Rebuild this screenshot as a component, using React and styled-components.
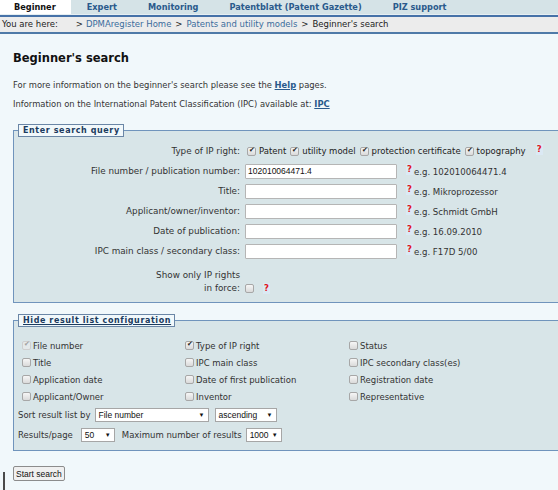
import React from "react";
import styled, { createGlobalStyle } from "styled-components";

const GlobalStyle = createGlobalStyle`
  html, body {
    margin: 0;
    padding: 0;
    background: #f1f8fb;
    overflow: hidden;
  }
  body {
    font-family: "DejaVu Sans", Verdana, sans-serif;
    font-size: 8.5px;
    color: #2a2a2a;
  }
`;

const tabs = ["Beginner", "Expert", "Monitoring", "Patentblatt (Patent Gazette)", "PIZ support"];

const ipTypes = ["Patent", "utility model", "protection certificate", "topography"];

const queryRows = [
  { label: "File number / publication number:", value: "102010064471.4", hint: "e.g. 102010064471.4" },
  { label: "Title:", value: "", hint: "e.g. Mikroprozessor" },
  { label: "Applicant/owner/inventor:", value: "", hint: "e.g. Schmidt GmbH" },
  { label: "Date of publication:", value: "", hint: "e.g. 16.09.2010" },
  { label: "IPC main class / secondary class:", value: "", hint: "e.g. F17D 5/00" },
];

const columns = [
  ["File number", "Title", "Application date", "Applicant/Owner"],
  ["Type of IP right", "IPC main class", "Date of first publication", "Inventor"],
  ["Status", "IPC secondary class(es)", "Registration date", "Representative"],
];

function App() {
  return (
    <Page>
      <GlobalStyle />
      <TabBar>
        {tabs.map((t, i) => (
          <Tab key={t} $active={i === 0}>{t}</Tab>
        ))}
      </TabBar>
      <Breadcrumb>
        You are here:<Sep $first>&gt;</Sep><Crumb>DPMAregister Home</Crumb><Sep>&gt;</Sep>
        <Crumb>Patents and utility models</Crumb><Sep>&gt;</Sep>Beginner's search
      </Breadcrumb>

      <Content>
        <Title>Beginner's search</Title>
        <Info>For more information on the beginner's search please see the <InfoLink>Help</InfoLink> pages.</Info>
        <Info>Information on the International Patent Classification (IPC) available at: <InfoLink>IPC</InfoLink></Info>

        <Fieldset $top={10} $padTop={4} $padBottom={7}>
          <Legend>Enter search query</Legend>
          <Row>
            <Label>Type of IP right:</Label>
            <TypeList>
              {ipTypes.map((t) => (
                <TypeItem key={t}>
                  <Check type="checkbox" defaultChecked />
                  {t}
                </TypeItem>
              ))}
            </TypeList>
            <Help $gap={10}>?</Help>
          </Row>
          {queryRows.map((r) => (
            <Row key={r.label}>
              <Label>{r.label}</Label>
              <TextInput type="text" defaultValue={r.value} />
              <Help $gap={9}>?</Help>
              <Hint>{r.hint}</Hint>
            </Row>
          ))}
          <TallRow>
            <Label>Show only IP rights<br />in force:</Label>
            <Check type="checkbox" $bottom={2} />
            <Help $gap={8} $bottom={1}>?</Help>
          </TallRow>
        </Fieldset>

        <Fieldset $top={11} $padTop={10} $padBottom={5}>
          <Legend $underline>Hide result list configuration</Legend>
          <ColumnGrid>
            {columns[0].map((_, row) =>
              columns.map((col, c) => (
                <Option key={col[row]}>
                  <Check
                    type="checkbox"
                    defaultChecked={row === 0 && c < 2}
                    disabled={row === 0 && c === 0}
                  />
                  {col[row]}
                </Option>
              ))
            )}
          </ColumnGrid>
          <SelectRow>
            Sort result list by
            <FakeSelect $width={114} $gap={4}>File number<Arrow>▼</Arrow></FakeSelect>
            <FakeSelect $width={62} $gap={6}>ascending<Arrow>▼</Arrow></FakeSelect>
          </SelectRow>
          <SelectRow>
            Results/page
            <FakeSelect $width={34} $gap={8}>50<Arrow>▼</Arrow></FakeSelect>
            <Spacer />
            Maximum number of results
            <FakeSelect $width={36} $gap={4}>1000<Arrow>▼</Arrow></FakeSelect>
          </SelectRow>
        </Fieldset>

        <ButtonRow>
          <Caret />
          <SubmitButton type="button">Start search</SubmitButton>
        </ButtonRow>
      </Content>
    </Page>
  );
}

const Page = styled.div`
  width: 558px;
  height: 490px;
  overflow: hidden;
  display: flex;
  flex-direction: column;
`;

const TabBar = styled.div`
  display: flex;
  height: 14px;
  background: #d5e3e7;
  border-bottom: 1px solid #e6eff3;
`;

const Tab = styled.div`
  font-weight: bold;
  font-size: 8.2px;
  line-height: 14px;
  padding: 0 15px;
  background: ${(p) => (p.$active ? "#ffffff" : "transparent")};
  color: ${(p) => (p.$active ? "#111" : "#2a5a8c")};
  &:first-child {
    padding-left: 14px;
  }
  & + & {
    padding-left: 16px;
  }
`;

const Breadcrumb = styled.div`
  height: 15px;
  line-height: 15px;
  background: #ececec;
  border-top: 2px solid #4672a8;
  border-bottom: 2px solid #4f7aa8;
  padding-left: 2px;
  color: #222;
  white-space: nowrap;
`;

const Sep = styled.span`
  margin: 0 ${(p) => (p.$first ? "3px" : "4px")} 0 ${(p) => (p.$first ? "18px" : "4px")};
`;

const Crumb = styled.span`
  color: #3b6d9c;
`;

const Content = styled.div`
  padding: 16px 0 0 13px;
  display: flex;
  flex-direction: column;
  align-items: flex-start;
`;

const Title = styled.h1`
  margin: 0 0 9px;
  font-size: 11.5px;
  font-weight: bold;
  color: #111;
  line-height: 17px;
`;

const Info = styled.p`
  margin: 0;
  font-size: 8.4px;
  line-height: 19px;
  color: #333;
`;

const InfoLink = styled.a`
  font-weight: bold;
  color: #2a5a8c;
  text-decoration: underline;
`;

const Fieldset = styled.fieldset`
  align-self: stretch;
  margin: ${(p) => p.$top}px -20px 0 0;
  padding: ${(p) => p.$padTop}px 0 ${(p) => p.$padBottom}px 0;
  border: 1px solid #7094bc;
  background: #d8e5e8;
  min-width: 0;
`;

const Legend = styled.legend`
  margin-left: 4px;
  padding: 1px 3px 0 4px;
  border: 1px solid #6a86a6;
  background: #f1f8fb;
  font-weight: bold;
  font-size: 8px;
  letter-spacing: 0.6px;
  line-height: 10px;
  color: #1b3b5e;
  text-decoration: ${(p) => (p.$underline ? "underline" : "none")};
`;

const Row = styled.div`
  display: flex;
  align-items: center;
  height: 20px;
`;

const TallRow = styled.div`
  display: flex;
  align-items: flex-end;
  height: 34px;
`;

const Label = styled.div`
  width: 226px;
  flex-shrink: 0;
  text-align: right;
  padding-right: 5px;
  font-size: 8.8px;
  line-height: 13px;
  color: #333;
`;

const TypeList = styled.div`
  display: flex;
  align-items: center;
  gap: 4px;
  margin-left: 2px;
  color: #222;
`;

const TypeItem = styled.label`
  display: flex;
  align-items: center;
  gap: 2px;
`;

const Check = styled.input`
  appearance: none;
  margin: 0 1px ${(p) => p.$bottom ?? 0}px 0;
  width: 9px;
  height: 9px;
  border: 1px solid #a7a7a7;
  border-radius: 2px;
  background: linear-gradient(#f6f6f6, #dadada);
  position: relative;
  flex-shrink: 0;
  &:checked::after {
    content: "✔";
    position: absolute;
    left: 1px;
    top: -2px;
    font-size: 7px;
    color: #222;
  }
  &:disabled {
    border-color: #cfcfcf;
    background: #e4e9ea;
  }
  &:disabled::after {
    color: #a0a0a0;
  }
`;

const TextInput = styled.input`
  box-sizing: border-box;
  width: 152px;
  height: 15px;
  margin: 0;
  padding: 0 2px;
  border: 1px solid #b5b5b5;
  border-radius: 1px;
  background: #fff;
  font-family: "Liberation Sans", Arial, sans-serif;
  font-size: 8.5px;
  color: #111;
`;

const Help = styled.span`
  margin-left: ${(p) => p.$gap}px;
  margin-bottom: ${(p) => p.$bottom ?? 0}px;
  padding: 0 1px;
  background: #dbe9f4;
  color: #e0141a;
  font-weight: bold;
  font-size: 8.5px;
  line-height: 11px;
  align-self: ${(p) => (p.$bottom === undefined ? "flex-start" : "auto")};
  margin-top: ${(p) => (p.$bottom === undefined ? "3px" : "0")};
`;

const Hint = styled.span`
  margin-left: 1px;
  padding-top: 2px;
  font-size: 8.6px;
  color: #333;
`;

const ColumnGrid = styled.div`
  display: grid;
  grid-template-columns: 163px 164px 1fr;
  grid-auto-rows: 17px;
  padding-left: 8px;
`;

const Option = styled.label`
  display: flex;
  align-items: center;
  gap: 1px;
  color: #333;
`;

const SelectRow = styled.div`
  display: flex;
  align-items: center;
  height: 20px;
  padding-left: 4px;
  color: #333;
`;

const FakeSelect = styled.div`
  position: relative;
  box-sizing: border-box;
  width: ${(p) => p.$width}px;
  height: 14px;
  margin-left: ${(p) => p.$gap}px;
  padding-left: 3px;
  line-height: 12px;
  border: 1px solid #a6a6a6;
  background: #fff;
  font-family: "Liberation Sans", Arial, sans-serif;
  font-size: 8.5px;
  color: #111;
`;

const Arrow = styled.span`
  position: absolute;
  right: 3px;
  top: 0;
  font-size: 6px;
  color: #111;
`;

const Spacer = styled.span`
  width: 7px;
`;

const ButtonRow = styled.div`
  display: flex;
  align-items: flex-start;
  margin: 15px 0 0 -10px;
`;

const Caret = styled.div`
  width: 2px;
  height: 20px;
  margin: 6px 8px 0 0;
  background: #4a4a4a;
`;

const SubmitButton = styled.button`
  height: 15px;
  padding: 0 2px;
  border: 1px solid #8c8c8c;
  border-radius: 2px;
  background: #f0f0f0;
  font-family: "Liberation Sans", Arial, sans-serif;
  font-size: 8.5px;
  line-height: 12px;
  color: #111;
`;

export default App;
